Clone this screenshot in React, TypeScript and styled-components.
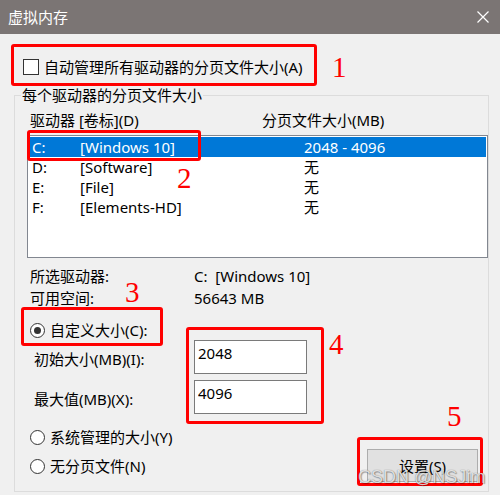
import React from "react";
import styled, { createGlobalStyle } from "styled-components";

const UI_FONT = `"Noto Sans", "Noto Sans CJK SC", sans-serif`;

const Global = createGlobalStyle`
  html, body { margin: 0; padding: 0; background: #f0f0f0; }
  body { font-family: ${UI_FONT}; }
`;

const Window = styled.div`
  position: relative;
  width: 500px;
  height: 495px;
  overflow: hidden;
  background: #f0f0f0;
  font-family: ${UI_FONT};
  font-size: 15px;
  line-height: 20px;
  color: #000;
  display: flex;
  flex-direction: column;
`;

const TitleBar = styled.div`
  flex: none;
  height: 34px;
  box-sizing: border-box;
  padding: 0 11px 0 8px;
  background: #7b7574;
  color: #fff;
  display: flex;
  align-items: center;
  justify-content: space-between;
`;

const Title = styled.span`
  font-size: 15px;
`;

const CheckRow = styled.label`
  display: flex;
  align-items: center;
  gap: 5px;
  height: 20px;
  margin: 23px 0 8px 23px;
`;

const CheckBox = styled.span`
  width: 16px;
  height: 16px;
  box-sizing: border-box;
  border: 1px solid #333;
  background: #fff;
`;

const GroupBox = styled.fieldset`
  margin: 0 0 0 14px;
  padding: 0;
  width: 475px;
  height: 407px;
  box-sizing: border-box;
  border: 1px solid #dcdcdc;
  min-inline-size: 0;
`;

const Legend = styled.legend`
  margin-left: 6px;
  padding: 0 1px;
  line-height: 20px;
  font-size: 15px;
`;

const GroupInner = styled.div`
  padding: 5px 0 0 12px;
  display: flex;
  flex-direction: column;
`;

const HeaderRow = styled.div`
  display: grid;
  grid-template-columns: 232px 1fr;
  padding-left: 3px;
  height: 20px;
`;

const DriveList = styled.div`
  margin-top: 5px;
  width: 461px;
  height: 123px;
  box-sizing: border-box;
  border: 1px solid #828790;
  background: #fff;
  padding: 1px;
`;

const DriveRow = styled.div<{ $selected?: boolean }>`
  display: grid;
  grid-template-columns: 48px 224px 1fr;
  height: 20px;
  padding-left: 3px;
  background: ${(p) => (p.$selected ? "#0078d7" : "transparent")};
  color: ${(p) => (p.$selected ? "#fff" : "#000")};
`;

const InfoGrid = styled.div`
  margin-top: 8px;
  display: grid;
  grid-template-columns: 164px 1fr;
  row-gap: 2px;
  padding-left: 3px;
`;

const RadioRow = styled.label`
  display: flex;
  align-items: center;
  gap: 5px;
  height: 20px;
  padding-left: 3px;
`;

const FirstRadio = styled(RadioRow)`
  margin-top: 12px;
`;

const RadioCircle = styled.span<{ $checked?: boolean }>`
  position: relative;
  width: 15px;
  height: 15px;
  box-sizing: border-box;
  border: 1px solid #333;
  border-radius: 50%;
  background: #fff;
  display: flex;
  align-items: center;
  justify-content: center;
  &::after {
    content: "";
    display: ${(p) => (p.$checked ? "block" : "none")};
    width: 7px;
    height: 7px;
    border-radius: 50%;
    background: #333;
  }
`;

const SizeGrid = styled.div`
  display: grid;
  grid-template-columns: 167px 113px;
  row-gap: 6px;
`;

const SizeLabel = styled.span`
  align-self: start;
  padding: 9px 0 0 7px;
`;

const SizeInput = styled.input`
  height: 34px;
  width: 113px;
  box-sizing: border-box;
  border: 1px solid #7a7a7a;
  background: #fff;
  margin: 0;
  padding: 2px 3px 10px 3px;
  font-family: ${UI_FONT};
  font-size: 15px;
  line-height: 20px;
  color: #000;
  outline: none;
`;

const BottomRow = styled.div`
  margin-top: 13px;
  display: flex;
  justify-content: space-between;
  align-items: flex-start;
`;

const RadioColumn = styled.div`
  display: flex;
  flex-direction: column;
  gap: 9px;
`;

const SetButton = styled.button`
  margin: 22px 10px 0 0;
  width: 111px;
  height: 33px;
  box-sizing: border-box;
  border: 1px solid #adadad;
  background: #e1e1e1;
  font-family: ${UI_FONT};
  font-size: 15px;
  line-height: 20px;
  color: #000;
  padding: 0;
`;

/* ---- annotation overlays (drawn on top of the screenshot) ---- */

const MarkBox = styled.div<{ $x: number; $y: number; $w: number; $h: number }>`
  position: absolute;
  left: ${(p) => p.$x}px;
  top: ${(p) => p.$y}px;
  width: ${(p) => p.$w}px;
  height: ${(p) => p.$h}px;
  box-sizing: border-box;
  border: 3px solid #ff0000;
  border-radius: 3px;
  pointer-events: none;
`;

const MarkNum = styled.span<{ $x: number; $y: number }>`
  position: absolute;
  left: ${(p) => p.$x}px;
  top: ${(p) => p.$y}px;
  font-family: "Liberation Serif", serif;
  font-size: 29px;
  line-height: 1;
  color: #ff0000;
`;

const Watermark = styled.span`
  position: absolute;
  left: 358px;
  top: 468px;
  font-family: "Liberation Sans", Arial, sans-serif;
  font-size: 18px;
  line-height: 1;
  color: rgba(255, 255, 255, 0.8);
  text-shadow: 0 0 1px rgba(0, 0, 0, 0.55), 1px 1px 1px rgba(0, 0, 0, 0.3);
  pointer-events: none;
`;

const drives = [
  { d: "C:", label: "[Windows 10]", size: "2048 - 4096", selected: true },
  { d: "D:", label: "[Software]", size: "无" },
  { d: "E:", label: "[File]", size: "无" },
  { d: "F:", label: "[Elements-HD]", size: "无" },
];

export default function App() {
  return (
    <Window>
      <Global />
      <TitleBar>
        <Title>虚拟内存</Title>
        <svg width="12" height="12" viewBox="0 0 12 12">
          <path d="M0.5 0.5 L11.5 11.5 M11.5 0.5 L0.5 11.5" stroke="#fff" strokeWidth="1.2" fill="none" />
        </svg>
      </TitleBar>

      <CheckRow>
        <CheckBox />
        <span>自动管理所有驱动器的分页文件大小(A)</span>
      </CheckRow>

      <GroupBox>
        <Legend>每个驱动器的分页文件大小</Legend>
        <GroupInner>
          <HeaderRow>
            <span>驱动器 [卷标](D)</span>
            <span>分页文件大小(MB)</span>
          </HeaderRow>
          <DriveList>
            {drives.map((r) => (
              <DriveRow key={r.d} $selected={r.selected}>
                <span>{r.d}</span>
                <span>{r.label}</span>
                <span>{r.size}</span>
              </DriveRow>
            ))}
          </DriveList>

          <InfoGrid>
            <span>所选驱动器:</span>
            <span>C:&nbsp;&nbsp;[Windows 10]</span>
            <span>可用空间:</span>
            <span>56643 MB</span>
          </InfoGrid>

          <FirstRadio>
            <RadioCircle $checked />
            <span>自定义大小(C):</span>
          </FirstRadio>

          <SizeGrid>
            <SizeLabel>初始大小(MB)(I):</SizeLabel>
            <SizeInput readOnly value="2048" />
            <SizeLabel>最大值(MB)(X):</SizeLabel>
            <SizeInput readOnly value="4096" />
          </SizeGrid>

          <BottomRow>
            <RadioColumn>
              <RadioRow>
                <RadioCircle />
                <span>系统管理的大小(Y)</span>
              </RadioRow>
              <RadioRow>
                <RadioCircle />
                <span>无分页文件(N)</span>
              </RadioRow>
            </RadioColumn>
            <SetButton>设置(S)</SetButton>
          </BottomRow>
        </GroupInner>
      </GroupBox>

      <MarkBox $x={11} $y={44} $w={306} $h={42} />
      <MarkBox $x={27} $y={130} $w={174} $h={31} />
      <MarkBox $x={21} $y={307} $w={142} $h={39} />
      <MarkBox $x={186} $y={327} $w={138} $h={97} />
      <MarkBox $x={357} $y={437} $w={126} $h={49} />

      <MarkNum $x={332} $y={53}>1</MarkNum>
      <MarkNum $x={177} $y={164}>2</MarkNum>
      <MarkNum $x={125} $y={278}>3</MarkNum>
      <MarkNum $x={329} $y={330}>4</MarkNum>
      <MarkNum $x={447} $y={402}>5</MarkNum>

      <Watermark>CSDN @NSJim</Watermark>
    </Window>
  );
}
